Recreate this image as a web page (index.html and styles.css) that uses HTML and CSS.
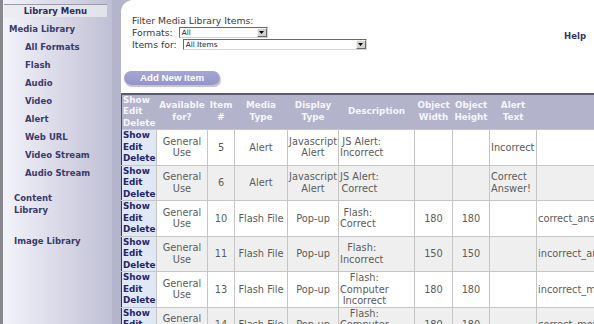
FILE: index.html
```html
<!DOCTYPE html>
<html>
<head>
<meta charset="utf-8">
<title>Media Library</title>
<link rel="stylesheet" href="styles.css">
</head>
<body>
<div class="page">
  <aside class="sidebar">
    <div class="menu-title">Library Menu</div>
    <ul class="menu">
      <li class="top">Media Library</li>
      <li class="sub">All Formats</li>
      <li class="sub">Flash</li>
      <li class="sub">Audio</li>
      <li class="sub">Video</li>
      <li class="sub">Alert</li>
      <li class="sub">Web URL</li>
      <li class="sub">Video Stream</li>
      <li class="sub">Audio Stream</li>
      <li class="top content">Content<br>Library</li>
      <li class="top image">Image Library</li>
    </ul>
  </aside>
  <main class="main">
    <div class="toolbar">
      <div class="filter">
        <div class="line">Filter Media Library Items:</div>
        <div class="row">Formats: <span class="select sel-formats">All<span class="arrow"><svg width="5" height="3" viewBox="0 0 5 3"><path d="M0 0H5L2.5 3Z" fill="#000"/></svg></span></span></div>
        <div class="row">Items for: <span class="select sel-items">All Items<span class="arrow"><svg width="5" height="3" viewBox="0 0 5 3"><path d="M0 0H5L2.5 3Z" fill="#000"/></svg></span></span></div>
      </div>
      <a class="help">Help</a>
    </div>
    <button class="add">Add New Item</button>
    <table class="items">
      <colgroup>
        <col class="c1"><col class="c2"><col class="c3"><col class="c4"><col class="c5"><col class="c6"><col class="c7"><col class="c8"><col class="c9"><col class="c10">
      </colgroup>
      <thead>
        <tr>
          <th class="act">Show<br>Edit<br>Delete</th>
          <th>Available<br>for?</th>
          <th>Item<br>#</th>
          <th>Media<br>Type</th>
          <th>Display<br>Type</th>
          <th>Description</th>
          <th>Object<br>Width</th>
          <th>Object<br>Height</th>
          <th>Alert<br>Text</th>
          <th></th>
        </tr>
      </thead>
      <tbody>
        <tr>
          <td class="act">Show<br>Edit<br>Delete</td>
          <td>General<br>Use</td><td>5</td><td>Alert</td><td>Javascript<br>Alert</td>
          <td class="left"><span class="blk">JS Alert:<br>Incorrect</span></td>
          <td></td><td></td>
          <td class="left"><span class="blk">Incorrect</span></td>
          <td class="left"></td>
        </tr>
        <tr class="alt">
          <td class="act">Show<br>Edit<br>Delete</td>
          <td>General<br>Use</td><td>6</td><td>Alert</td><td>Javascript<br>Alert</td>
          <td class="left"><span class="blk">JS Alert:<br>Correct</span></td>
          <td></td><td></td>
          <td class="left"><span class="blk al">Correct<br>Answer!</span></td>
          <td class="left"></td>
        </tr>
        <tr>
          <td class="act">Show<br>Edit<br>Delete</td>
          <td>General<br>Use</td><td>10</td><td>Flash File</td><td>Pop-up</td>
          <td class="left"><span class="blk">Flash:<br>Correct</span></td>
          <td>180</td><td>180</td><td></td>
          <td class="left">correct_answer.swf</td>
        </tr>
        <tr class="alt">
          <td class="act">Show<br>Edit<br>Delete</td>
          <td>General<br>Use</td><td>11</td><td>Flash File</td><td>Pop-up</td>
          <td class="left"><span class="blk">Flash:<br>Incorrect</span></td>
          <td>150</td><td>150</td><td></td>
          <td class="left">incorrect_answer.swf</td>
        </tr>
        <tr>
          <td class="act">Show<br>Edit<br>Delete</td>
          <td>General<br>Use</td><td>13</td><td>Flash File</td><td>Pop-up</td>
          <td class="left"><span class="blk">Flash:<br>Computer<br>Incorrect</span></td>
          <td>180</td><td>180</td><td></td>
          <td class="left">incorrect_move.swf</td>
        </tr>
        <tr class="alt">
          <td class="act">Show<br>Edit<br>Delete</td>
          <td>General<br>Use</td><td>14</td><td>Flash File</td><td>Pop-up</td>
          <td class="left"><span class="blk">Flash:<br>Computer<br>Correct</span></td>
          <td>180</td><td>180</td><td></td>
          <td class="left">correct_move.swf</td>
        </tr>
      </tbody>
    </table>
  </main>
</div>
</body>
</html>
```
FILE: styles.css
```css
html, body {
  margin: 0;
  height: 100%;
  overflow: hidden;
}
body {
  font-family: "DejaVu Sans", Verdana, sans-serif;
  background: #b4b4cc;
}
.page {
  display: flex;
  height: 100%;
}
.sidebar {
  flex: none;
  width: 109px;
  border-left: 3px solid #88888e;
  background: linear-gradient(to right, #f3f3fb, #c0c0d5);
  padding-top: 4px;
}
.menu-title {
  margin: 0 5px 0 1px;
  height: 12px;
  border-top: 1px solid #9b9ba8;
  background: linear-gradient(to right, #ececf2, #e2e2ea);
  font-weight: bold;
  font-size: 8.5px;
  line-height: 12px;
  text-align: center;
  color: #2c2c5a;
}
.menu {
  list-style: none;
  margin: 3px 0 0;
  padding: 0;
  font-weight: bold;
  font-size: 8.5px;
  color: #3a3a6c;
}
.menu li {
  line-height: 18px;
}
.menu .top {
  padding-left: 6px;
}
.menu .sub {
  padding-left: 22px;
}
.menu .content {
  padding-left: 11px;
  line-height: 12px;
  margin-top: 10px;
}
.menu .image {
  padding-left: 11px;
  margin-top: 16px;
}
.main {
  flex: 1;
  min-width: 0;
  margin-left: 9px;
  background: #fff;
  border-top-left-radius: 12px;
  padding-top: 15px;
}
.toolbar {
  display: flex;
  justify-content: space-between;
  align-items: flex-start;
  padding: 0 8px 0 11px;
}
.filter {
  font-size: 9.3px;
  color: #3a3a3a;
}
.filter .line {
  line-height: 11.5px;
}
.filter .row {
  display: flex;
  align-items: center;
  height: 12px;
  gap: 3px;
  white-space: pre;
}
.select {
  box-sizing: border-box;
  display: inline-flex;
  align-items: center;
  justify-content: space-between;
  height: 11px;
  border: 1px solid;
  border-color: #6a6a6a #d4d4d4 #d4d4d4 #6a6a6a;
  background: #fff;
  font-size: 7.3px;
  color: #222;
  padding: 0 0 0 2px;
}
.sel-formats {
  width: 89px;
}
.sel-items {
  width: 184px;
}
.arrow {
  box-sizing: border-box;
  display: flex;
  align-items: center;
  justify-content: center;
  width: 10px;
  height: 9px;
  background: #d6d3ce;
  border: 1px solid;
  border-color: #f4f4f4 #6a6a6a #6a6a6a #f4f4f4;
}
.help {
  margin-top: 15px;
  font-weight: bold;
  font-size: 8.5px;
  line-height: 12px;
  color: #333366;
}
.add {
  display: block;
  margin: 20px 0 0 3px;
  width: 96px;
  height: 14px;
  padding: 0;
  border: 0;
  border-radius: 7px;
  background: linear-gradient(#a6a6d6, #9494c8);
  box-shadow: 1px 2px 1px #c2c2c8;
  color: #fff;
  font-family: "Liberation Sans", Arial, sans-serif;
  font-weight: bold;
  font-size: 9.7px;
  line-height: 14px;
}
.items {
  margin-top: 8px;
  border-collapse: collapse;
  table-layout: fixed;
  width: 525px;
}
.c1 { width: 35px; }
.c2 { width: 51px; }
.c3 { width: 27px; }
.c4 { width: 53px; }
.c5 { width: 51px; }
.c6 { width: 76px; }
.c7 { width: 38px; }
.c8 { width: 37px; }
.c9 { width: 47px; }
.c10 { width: 110px; }
.items th {
  background: #b3b3cb;
  color: #f6f6fb;
  font-weight: bold;
  font-size: 8.8px;
  line-height: 11.5px;
  text-align: center;
  vertical-align: middle;
  padding: 0 1px;
  border-top: 2px solid #5a5a70;
  white-space: nowrap;
}
.items th.act {
  text-align: left;
  border-left: 1px solid #4a4a66;
}
.items td {
  border: 1px solid #c6c6c6;
  color: #5c5c5c;
  font-size: 9.8px;
  line-height: 11.5px;
  text-align: center;
  vertical-align: middle;
  padding: 0 1px;
  white-space: nowrap;
  background: #fff;
}
.items tr.alt td {
  background: #efefef;
}
.items td.act,
.items tr.alt td.act {
  background: #e0e8f6;
  color: #25256a;
  font-weight: bold;
  font-size: 8.8px;
  text-align: left;
  border-left: 1px solid #34345a;
}
.items td.left {
  text-align: left;
}
.blk {
  display: inline-block;
  text-align: center;
}
.blk.al {
  text-align: left;
}
```
